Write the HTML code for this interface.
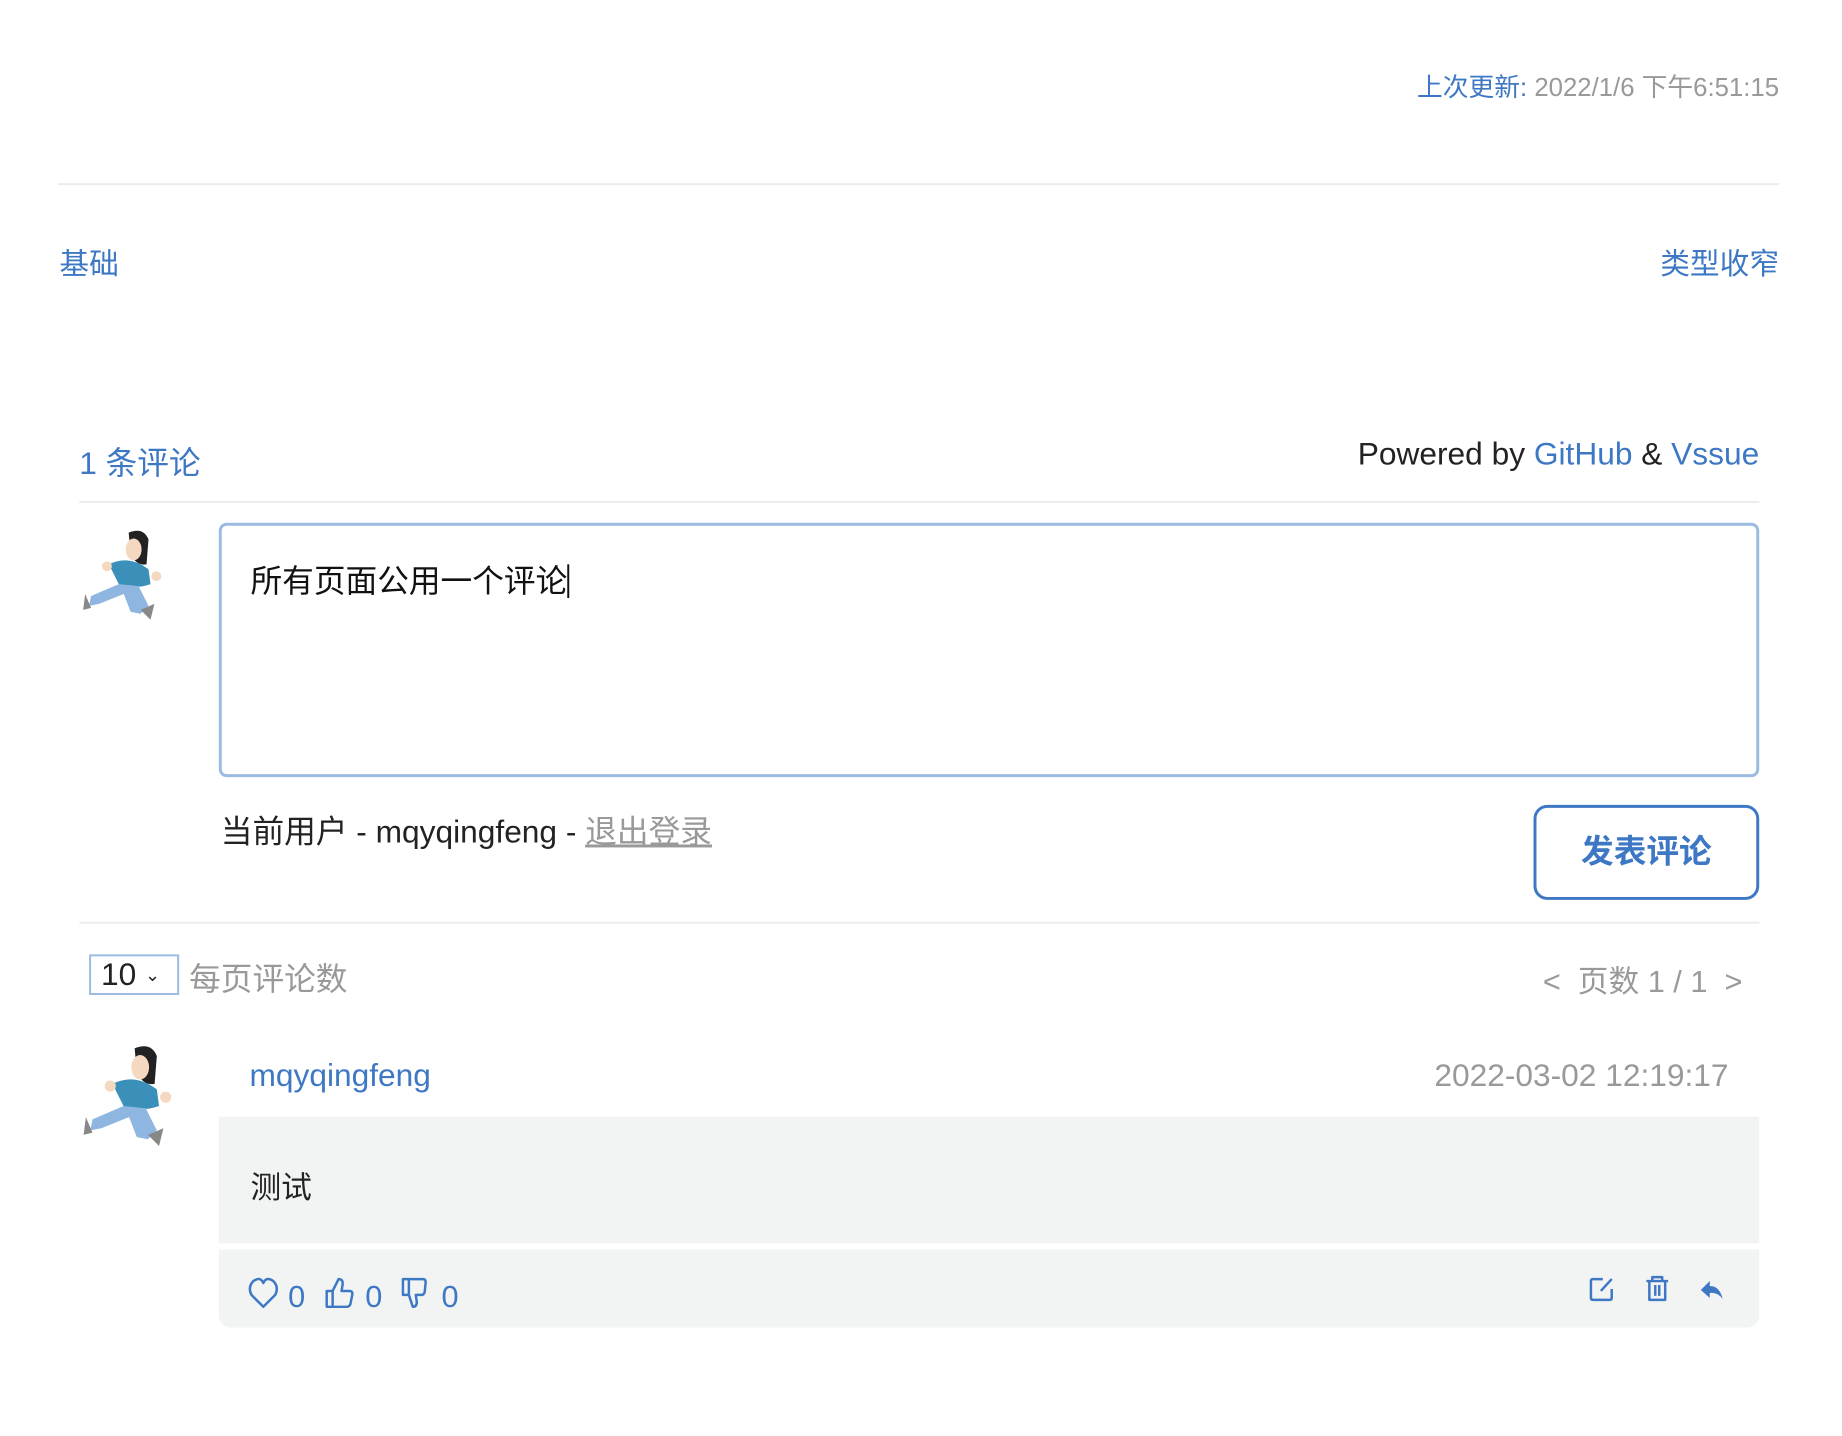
<!DOCTYPE html>
<html><head><meta charset="utf-8"><style>
*{margin:0;padding:0;box-sizing:border-box}
body{width:1842px;height:1436px;background:#fff;position:relative;overflow:hidden;font-family:"Liberation Sans","Noto Sans CJK SC",sans-serif;color:#222}
#w{position:absolute;left:0;top:0;width:1842px;height:1436px;transform:scale(0.99);transform-origin:0 0}
.a{position:absolute;white-space:nowrap}
.b{color:#3e78c4}
.g{color:#999}
.hr{position:absolute;height:2px;background:#eaecef}
</style></head><body><div id="w">
<div class="a" style="right:45px;top:68px;font-size:26px"><span class="b">上次更新:</span> <span class="g">2022/1/6 下午6:51:15</span></div>
<div class="hr" style="left:59px;width:1738px;top:185px"></div>
<div class="a b" style="left:60px;top:242px;font-size:30px">基础</div>
<div class="a b" style="right:45px;top:242px;font-size:30px">类型收窄</div>
<div class="a b" style="left:80px;top:443px;font-size:32px">1 条评论</div>
<div class="a" style="right:65px;top:440px;font-size:32px">Powered by <span class="b">GitHub</span> &amp; <span class="b">Vssue</span></div>
<div class="hr" style="left:80px;width:1697px;top:506px"></div>

<svg class="a" style="left:80px;top:530px" width="100" height="100" viewBox="0 0 100 100">
<path d="M50 8 Q65 2 70 15 L68 40 Q58 42 52 30 Z" fill="#222"/><ellipse cx="55" cy="25" rx="8" ry="11" fill="#f5d8c0"/>
<path d="M30 40 Q50 30 70 45 L72 60 Q55 66 40 60 Z" fill="#3a90b8"/><circle cx="28" cy="42" r="5" fill="#f5d8c0"/><circle cx="78" cy="52" r="5" fill="#f5d8c0"/>
<path d="M40 60 L12 72 L10 82 L20 80 L45 70 L52 88 L62 90 L70 82 L60 62 Z" fill="#8eb6e0"/><path d="M6 70 L12 84 L4 86 Z M62 86 L76 80 L72 96 Z" fill="#888"/></svg>

<div class="a" style="left:221px;top:528px;width:1556px;height:257px;border:3px solid #9bbbe3;border-radius:8px"></div>
<div class="a" style="left:253px;top:562px;font-size:32px;color:#111">所有页面公用一个评论<span style="display:inline-block;width:2px;height:34px;background:#111;vertical-align:-6px"></span></div>
<div class="a" style="left:223px;top:815px;font-size:32px;color:#222">当前用户 - mqyqingfeng - <span style="color:#999;text-decoration:underline">退出登录</span></div>
<div class="a b" style="left:1549px;top:813px;width:228px;height:96px;border:3px solid #3e78c4;border-radius:14px;font-size:33px;font-weight:bold;text-align:center;line-height:88px">发表评论</div>
<div class="hr" style="left:80px;width:1697px;top:931px"></div>

<div class="a" style="left:90px;top:964px;width:91px;height:41px;border:2px solid #9bbbe3;font-size:32px;line-height:36px;padding-left:10px;color:#222">10 <span style="font-size:18px;vertical-align:4px">⌄</span></div>
<div class="a g" style="left:191px;top:964px;font-size:32px">每页评论数</div>
<div class="a g" style="right:82px;top:966px;font-size:31px">&lt; &nbsp;页数 1 / 1 &nbsp;&gt;</div>

<svg class="a" style="left:80px;top:1050px" width="112" height="112" viewBox="0 0 100 100">
<path d="M50 8 Q65 2 70 15 L68 40 Q58 42 52 30 Z" fill="#222"/><ellipse cx="55" cy="25" rx="8" ry="11" fill="#f5d8c0"/>
<path d="M30 40 Q50 30 70 45 L72 60 Q55 66 40 60 Z" fill="#3a90b8"/><circle cx="28" cy="42" r="5" fill="#f5d8c0"/><circle cx="78" cy="52" r="5" fill="#f5d8c0"/>
<path d="M40 60 L12 72 L10 82 L20 80 L45 70 L52 88 L62 90 L70 82 L60 62 Z" fill="#8eb6e0"/><path d="M6 70 L12 84 L4 86 Z M62 86 L76 80 L72 96 Z" fill="#888"/></svg>

<div class="a b" style="left:252px;top:1068px;font-size:32px">mqyqingfeng</div>
<div class="a g" style="right:96px;top:1068px;font-size:32px">2022-03-02 12:19:17</div>
<div class="a" style="left:221px;top:1128px;width:1556px;height:128px;background:#f2f4f4"></div>
<div class="a" style="left:253px;top:1174px;font-size:31px;color:#222">测试</div>
<div class="a" style="left:221px;top:1262px;width:1556px;height:79px;background:#f2f4f4;border-radius:0 0 12px 12px"></div>

<svg class="a" style="left:251px;top:1282px" width="240" height="50" viewBox="0 0 240 50">
<g fill="none" stroke="#3e78c4" stroke-width="2.5" stroke-linejoin="round">
<path d="M15 38 L3 26 Q-1 18 5 12 Q12 7 15 14 Q18 7 25 12 Q31 18 27 26 Z"/>
<path d="M79 22 h6 v16 h-6 z M85 22 l6 -12 q5 0 4 6 l-1 6 h8 q3 0 3 3 l-2 10 q-1 3 -4 3 h-14"/>
<path d="M162 26 h-6 v-16 h6 z M162 10 h14 q3 0 3 3 l-1 10 q-1 3 -3 3 h-6 l1 7 q0 5 -4 5 l-4 -12"/>
</g>
<text x="40" y="38" font-size="31" fill="#3e78c4" font-family="Liberation Sans">0</text>
<text x="118" y="38" font-size="31" fill="#3e78c4" font-family="Liberation Sans">0</text>
<text x="195" y="38" font-size="31" fill="#3e78c4" font-family="Liberation Sans">0</text>
</svg>

<svg class="a" style="left:1603px;top:1284px" width="170" height="40" viewBox="0 0 170 40">
<g fill="none" stroke="#3e78c4" stroke-width="2.5" stroke-linejoin="round">
<path d="M16 8 h-10 q-2 0 -2 2 v17 q0 2 2 2 h17 q2 0 2 -2 v-9"/><path d="M14 20 L25 8"/>
<path d="M60 10 h22 M66 10 v-4 h10 v4 M63 10 v19 h16 v-19 M69 14 v11 M73 14 v11"/>
</g>
<path d="M115 19 L124 10 L124 15 Q134 15 137 28 Q132 21 124 22 L124 27 Z" fill="#3e78c4"/>
</svg>
</div></body></html>
